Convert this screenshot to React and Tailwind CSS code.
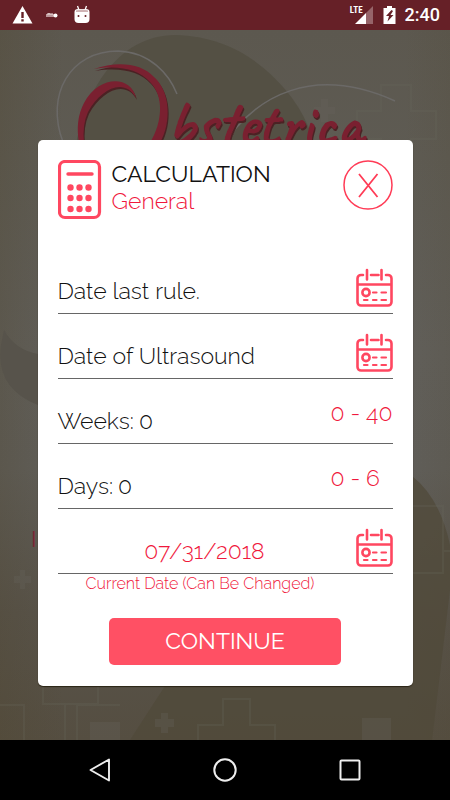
import React from "react";

const sans = "font-['Raleway','Lato',sans-serif]";

function CalendarIcon() {
  return (
    <svg viewBox="0 0 37 39" className="h-[39px] w-[37px]" fill="none" stroke="#ff4760" strokeWidth="2.6" strokeLinecap="round" aria-hidden="true">
      <path d="M7 7H5a3.500 3.500 0 0 0-3.500 3.500V34A3.500 3.500 0 0 0 5 37.500H32A3.500 3.500 0 0 0 35.500 34V10.500A3.500 3.500 0 0 0 32 7H30M15 7h7.500M11 2v9.500M25.500 2v9.500M2 16.500h33" />
      <circle cx="10" cy="24.500" r="3.600" />
      <path d="M17 24.500h3.500M25.500 24.500h4.500M8 32h3.500M17 32h3.500M25.500 32h4.500" strokeWidth="2.200" />
    </svg>
  );
}

function CalculatorIcon() {
  return (
    <svg viewBox="0 0 44 60" className="h-[60px] w-11 shrink-0" fill="none" aria-hidden="true">
      <rect x="1.500" y="1.500" width="40" height="56" rx="5.500" stroke="#ff4760" strokeWidth="3.200" />
      <path d="M10 14h24" stroke="#ff4760" strokeWidth="3.400" strokeLinecap="round" />
      {[27.5, 38, 49].map((y) =>
        [12.5, 21.5, 30.5].map((x) => <circle key={`${x}-${y}`} cx={x} cy={y} r="3.200" fill="#ff4760" />)
      )}
    </svg>
  );
}

function StatusBar() {
  return (
    <header className="flex h-[30px] items-center bg-[#662027] pr-[10px] pl-3 text-white">
      <svg viewBox="0 0 22 20" className="h-5 w-[22px]" aria-hidden="true">
        <path d="M10.500 1L20.500 18.500H.5z" fill="#fff" />
        <path d="M9.300 7h2.400v6H9.300zM9.300 14.300h2.400v2.200H9.300z" fill="#662027" />
      </svg>
      <svg viewBox="0 0 12 8" className="ml-3 h-2 w-3" aria-hidden="true">
        <path d="M1 6V3M3 6V2M5 6V3M7 6V3M1 3h6" stroke="#f3e6e7" strokeWidth="1.200" fill="none" />
        <circle cx="9.500" cy="4.500" r="2" fill="#fff" />
      </svg>
      <svg viewBox="0 0 16 20" className="ml-4 h-5 w-4" aria-hidden="true">
        <path d="M3.500 1L5 5M12.500 1L11 5" stroke="#fff" strokeWidth="1.300" />
        <path d="M.5 7Q.5 4 4 4h8q3.500 0 3.500 3v7q0 4-4 4h-7q-4 0-4-4z" fill="#fff" />
        <path d="M2 5.500Q8 3.500 14 5.500V7H2z" fill="#cfb3b5" />
        <circle cx="4.500" cy="11" r="1" fill="#662027" />
        <circle cx="11.500" cy="11" r="1" fill="#662027" />
      </svg>
      <div className="ml-auto flex items-center">
        <span className="self-start pt-1 font-['Roboto_Condensed','Roboto',sans-serif] text-[9px] leading-3 font-bold">LTE</span>
        <svg viewBox="0 0 18 18" className="-ml-2 h-[18px] w-[18px]" aria-hidden="true">
          <path d="M0 18L11 7V18z" fill="#fff" />
          <path d="M11 7L18 0V18H11z" fill="#966469" />
        </svg>
        <svg viewBox="0 0 14 18" className="ml-[10px] h-[18px] w-[14px]" aria-hidden="true">
          <path d="M4 0h5v2h3.500v16H.5V2H4z" fill="#fff" />
          <path d="M8.500 4L3 10h3L4.500 15.500 10.500 9H7.500L10 5z" fill="#662027" />
        </svg>
        <time className="ml-2 font-['Roboto',sans-serif] text-lg leading-[30px] font-medium">2:40</time>
      </div>
    </header>
  );
}

function Backdrop() {
  return (
    <div className="absolute inset-0 overflow-hidden bg-[linear-gradient(90deg,#4e442c44_0%,#4e442c00_14%,#4e442c00_90%,#4e442c22_100%),linear-gradient(180deg,#5c584f_0%,#5e5b53_18%,#615f5a_45%,#605e59_62%,#58534a_82%,#554e41_100%)]" aria-hidden="true">
      <svg viewBox="0 30 450 710" preserveAspectRatio="xMidYMin slice" className="absolute inset-0 h-full w-full" fill="none">
        <path d="M72 180C76 90 120 35 175 35C230 36 268 66 292 98C310 122 318 150 320 180z" fill="#545044" />
        <path d="M4 330Q15 350 38 354V405Q-5 388 1 345z" fill="#57534b" />
        <path d="M412 476Q440 498 450 545V590L432 740H130L165 686H412z" fill="#50493a" fillOpacity=".75" />
        <g stroke="#68665b" strokeOpacity=".25" strokeWidth="2">
          <path d="M381 85h30v26h25v28h-25v30h-30v-30h-24v-28h24z" />
          <path d="M198 740v-15h25v-26h27v26h25v15M43 680v24h55v-24M0 705h24v35M65 704v36M77 740v-35h43M412 506h31v67h-30M443 551h7" />
        </g>
        <g fill="#66655d" fillOpacity=".3">
          <path d="M321 99h7v8h7v7h-7v8h-7v-8h-7v-7h7zM161 713h7v6h6v8h-6v6h-7v-6h-6v-8h6zM20 570h5v6h6v7h-6v6h-5v-6h-6v-7h6zM362 718h29v22h-29zM90 722h30v18H90z" />
        </g>
        <path d="M63 142C45 95 70 51 118 51C150 52 169 74 177 94" stroke="#6b6967" strokeWidth="1.500" />
        <path d="M220 150C255 93 315 65 395 101" stroke="#6b6967" strokeWidth="1.500" />
        <g fill="#4b2224" transform="translate(1 2)">
          <path d="M94 69C117 61 141 63 154 77C170 91 172 121 160 143H150C163 121 164 96 150 82C138 69 119 65 94 69zM136 98C124 77 101 89 88 112Q82 125 84 143H79Q75 120 84 103C99 75 131 75 136 98z" />
        </g>
        <g fill="#7a2030">
          <path d="M94 69C117 61 141 63 154 77C170 91 172 121 160 143H150C163 121 164 96 150 82C138 69 119 65 94 69zM136 98C124 77 101 89 88 112Q82 125 84 143H79Q75 120 84 103C99 75 131 75 136 98z" />
        </g>
      </svg>
      <p className="absolute top-[54px] left-[167px] font-['Caveat','Patrick_Hand','Kalam','Liberation_Sans',sans-serif] text-[62px] leading-[80px] font-bold text-[#7a2030] [text-shadow:1px_2px_0_#4b2224]">bstetrica</p>
      <p className={`absolute top-[495px] left-[31px] text-[22px] leading-7 text-[#7b2533] ${sans}`}>I</p>
    </div>
  );
}

function Row({ id, label, value, range, date }) {
  return (
    <div className="flex h-[65px] items-end border-b border-[#666] text-[23px]">
      <div className="flex min-w-0 flex-1 items-baseline gap-[5px] pb-2">
        {date ? (
          <input id={id} aria-label={label} placeholder={label} className="h-7 w-full bg-transparent leading-7 outline-none placeholder:text-[#111] placeholder:opacity-100" />
        ) : (
          <>
            <label htmlFor={id} className="leading-7">{label}</label>
            <input id={id} defaultValue={value} inputMode="numeric" className="h-7 w-10 bg-transparent leading-7 outline-none" />
          </>
        )}
      </div>
      {date ? (
        <button type="button" aria-label={`Choose ${label}`} className="shrink-0 pb-[6px]"><CalendarIcon /></button>
      ) : (
        <span className="w-[62px] shrink-0 pb-4 leading-7 whitespace-nowrap text-[#f0183c]">{range}</span>
      )}
    </div>
  );
}

export default function App() {
  return (
    <div className={`flex min-h-screen flex-col bg-black ${sans}`}>
      <StatusBar />
      <main className="relative flex flex-1 flex-col items-center pt-[110px] pb-[54px]">
        <Backdrop />
        <section role="dialog" aria-label="Calculation" className="relative w-5/6 rounded-[5px] bg-white px-5 pt-5 pb-[21px] font-light text-[#111] shadow-[0_1px_1px_#2a2415]">
          <div className="flex h-[89px] items-start">
            <CalculatorIcon />
            <div className="ml-[10px] text-[23px] leading-[27px]">
              <h1 className="font-normal">CALCULATION</h1>
              <p className="text-[#f0183c]">General</p>
            </div>
            <button type="button" aria-label="Close" className="ml-auto">
              <svg viewBox="0 0 50 50" className="h-[50px] w-[50px]" fill="none" stroke="#ff3b56" aria-hidden="true">
                <circle cx="25" cy="25" r="24" strokeWidth="1.500" />
                <path d="M16 14L34.500 37M34.500 14L16 37" strokeWidth="1.800" />
              </svg>
            </button>
          </div>
          <form>
            <Row id="rule" label="Date last rule." date />
            <Row id="ultrasound" label="Date of Ultrasound" date />
            <Row id="weeks" label="Weeks:" value="0" range="0 - 40" />
            <Row id="days" label="Days:" value="0" range="0 - 6" />
            <div className="flex h-[65px] items-end border-b border-[#666] text-[23px] text-[#f0183c]">
              <input id="current" defaultValue="07/31/2018" className="mb-2 h-7 min-w-0 flex-1 bg-transparent pr-1 text-center leading-7 outline-none" />
              <button type="button" aria-label="Choose current date" className="shrink-0 pb-[6px]"><CalendarIcon /></button>
            </div>
            <label htmlFor="current" className="block h-11 pl-7 text-base leading-5 text-[#f0183c]">Current Date (Can Be Changed)</label>
            <button type="button" className="mx-auto block h-[47px] w-[232px] rounded-[5px] bg-[#ff5064] text-[23px] font-normal text-white">CONTINUE</button>
          </form>
        </section>
      </main>
      <nav className="grid h-[60px] grid-cols-[100px_1fr_100px] items-center px-[50px]">
        <button type="button" aria-label="Back" className="flex justify-center">
          <svg viewBox="0 0 24 24" className="h-6 w-6" fill="none" stroke="#eee" strokeWidth="1.900" strokeLinejoin="round"><path d="M21 1.500v21L2.500 12z" /></svg>
        </button>
        <button type="button" aria-label="Home" className="flex justify-center">
          <svg viewBox="0 0 24 24" className="h-6 w-6" fill="none" stroke="#eee" strokeWidth="2"><circle cx="12" cy="12" r="10.700" /></svg>
        </button>
        <button type="button" aria-label="Recent apps" className="flex justify-center">
          <svg viewBox="0 0 24 24" className="h-6 w-6" fill="none" stroke="#eee" strokeWidth="2"><rect x="2.500" y="2.500" width="19" height="19" rx="1" /></svg>
        </button>
      </nav>
    </div>
  );
}
